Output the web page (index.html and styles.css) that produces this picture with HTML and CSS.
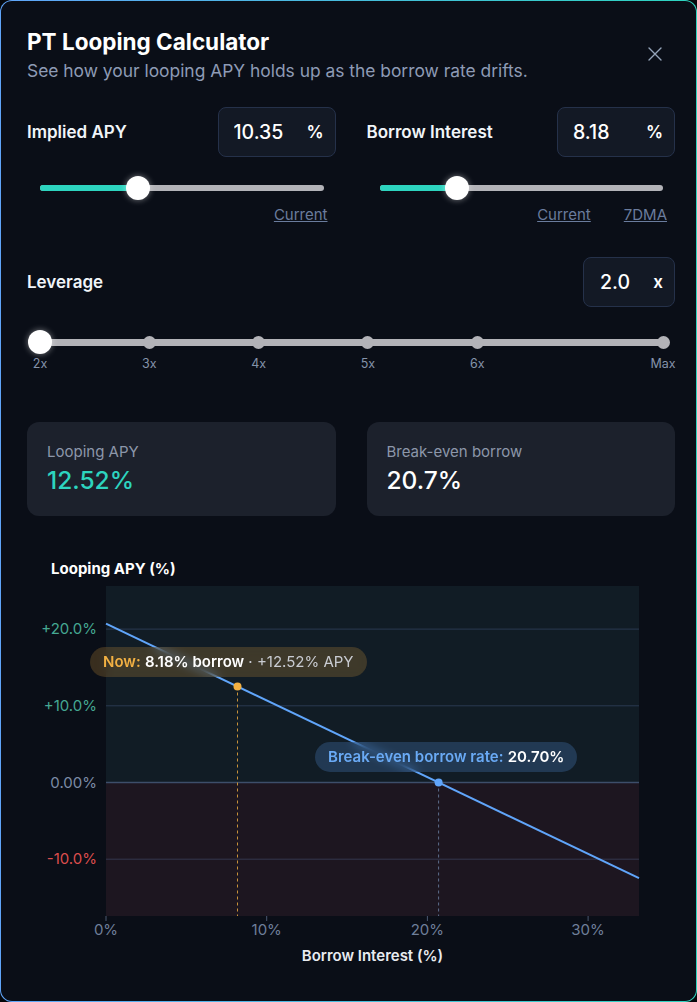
FILE: index.html
```html
<!doctype html>
<html>
<head>
<meta charset="utf-8">
<title>PT Looping Calculator</title>
<link rel="stylesheet" href="styles.css">
</head>
<body>
<div class="modal">
  <header class="modal-head">
    <div>
      <h1 class="title">PT Looping Calculator</h1>
      <p class="subtitle">See how your looping APY holds up as the borrow rate drifts.</p>
    </div>
    <button class="close" aria-label="Close">
      <svg width="14" height="14" viewBox="0 0 14 14"><path d="M1 1L13 13M13 1L1 13" stroke="#94a3b8" stroke-width="1.4" stroke-linecap="round"/></svg>
    </button>
  </header>

  <div class="rates">
    <div class="field">
      <div class="field-row">
        <label class="field-label">Implied APY</label>
        <div class="num-box"><input class="num-input" value="10.35"><span class="unit">%</span></div>
      </div>
      <div class="slider">
        <div class="track"><div class="fill" style="width:34.5%"></div></div>
        <div class="thumb" style="left:34.5%"></div>
      </div>
      <div class="presets"><a href="#">Current</a></div>
    </div>
    <div class="field">
      <div class="field-row">
        <label class="field-label">Borrow Interest</label>
        <div class="num-box"><input class="num-input" value="8.18"><span class="unit">%</span></div>
      </div>
      <div class="slider">
        <div class="track"><div class="fill" style="width:27.27%"></div></div>
        <div class="thumb" style="left:27.27%"></div>
      </div>
      <div class="presets"><a href="#">Current</a><a href="#">7DMA</a></div>
    </div>
  </div>

  <div class="leverage">
    <div class="field-row">
      <label class="field-label">Leverage</label>
      <div class="num-box num-box-sm"><input class="num-input" value="2.0"><span class="unit">x</span></div>
    </div>
    <div class="slider slider-lev">
      <div class="track track-lev"></div>
      <span class="dot" style="left:17.54%"></span>
      <span class="dot" style="left:35.09%"></span>
      <span class="dot" style="left:52.63%"></span>
      <span class="dot" style="left:70.18%"></span>
      <span class="dot" style="left:100%"></span>
      <div class="thumb" style="left:0%"></div>
    </div>
    <div class="ticks">
      <span style="left:0%">2x</span>
      <span style="left:17.54%">3x</span>
      <span style="left:35.09%">4x</span>
      <span style="left:52.63%">5x</span>
      <span style="left:70.18%">6x</span>
      <span style="left:100%">Max</span>
    </div>
  </div>

  <div class="stats">
    <div class="stat">
      <div class="stat-label">Looping APY</div>
      <div class="stat-value good">12.52%</div>
    </div>
    <div class="stat">
      <div class="stat-label">Break-even borrow</div>
      <div class="stat-value">20.7%</div>
    </div>
  </div>

  <div class="chart">
    <div class="chart-title">Looping APY (%)</div>
    <div class="plot">
      <svg class="plot-svg" width="648" height="390" viewBox="0 0 648 390">
        <!-- profit / loss zones -->
        <rect x="79" y="6" width="533" height="196.5" fill="#111c25"/>
        <rect x="79" y="202.5" width="533" height="133.5" fill="#1d1620"/>
        <!-- grid -->
        <line x1="79" x2="612" y1="49.1" y2="49.1" stroke="#2a3a51"/>
        <line x1="79" x2="612" y1="125.8" y2="125.8" stroke="#2a3a51"/>
        <line x1="79" x2="612" y1="279.2" y2="279.2" stroke="#34384e"/>
        <line x1="79" x2="612" y1="202.5" y2="202.5" stroke="#3d4e6a" stroke-width="1.5"/>
        <!-- y axis -->
        <text class="ytick pos" x="70" y="54">+20.0%</text>
        <text class="ytick pos" x="70" y="131">+10.0%</text>
        <text class="ytick zero" x="70" y="207.5">0.00%</text>
        <text class="ytick neg" x="70" y="284">-10.0%</text>
        <!-- x axis -->
        <g stroke="#4a5870">
          <line x1="79" x2="79" y1="336" y2="341"/>
          <line x1="239.7" x2="239.7" y1="336" y2="341"/>
          <line x1="400.4" x2="400.4" y1="336" y2="341"/>
          <line x1="561.1" x2="561.1" y1="336" y2="341"/>
        </g>
        <text class="xtick" x="79" y="355">0%</text>
        <text class="xtick" x="239.7" y="355">10%</text>
        <text class="xtick" x="400.4" y="355">20%</text>
        <text class="xtick" x="561.1" y="355">30%</text>
        <text class="axis-title" x="345.5" y="381">Borrow Interest (%)</text>
        <!-- markers -->
        <line x1="210.5" x2="210.5" y1="106.5" y2="336" stroke="#c8923a" stroke-dasharray="3 3"/>
        <line x1="411.6" x2="411.6" y1="202.5" y2="336" stroke="#5d6e8c" stroke-dasharray="3 3"/>
        <!-- apy = L*implied - (L-1)*borrow -->
        <line x1="79" y1="43.7" x2="612" y2="298.1" stroke="#60a5fa" stroke-width="2"/>
        <circle cx="210.5" cy="106.5" r="4" fill="#f2b043"/>
        <circle cx="411.6" cy="202.5" r="4" fill="#60a5fa"/>
      </svg>
      <div class="pill pill-now" style="left:63px;top:67px"><b class="now">Now:</b> <b>8.18% borrow</b> · +12.52% APY</div>
      <div class="pill pill-be" style="left:288px;top:162px"><b class="be">Break-even borrow rate:</b> <b>20.70%</b></div>
    </div>
  </div>
</div>
</body>
</html>
```

FILE: styles.css
```css
*{box-sizing:border-box}
body{margin:0;background:#05070b;font-family:Inter,"Noto Sans",sans-serif;color:#f1f5f9}

.modal{min-height:100vh;width:100%;padding:27px 21px 30px 26px;border:1px solid transparent;border-radius:12px;
  background:linear-gradient(#0a0e17,#0a0e17) padding-box,linear-gradient(90deg,#60a5fa,#2dd4bf) border-box}

.modal-head{display:flex;justify-content:space-between;align-items:flex-start}
.title{margin:0;font-size:22.5px;line-height:28px;font-weight:700;color:#fff}
.subtitle{margin:3px 0 0;font-size:17.4px;line-height:24px;color:#8e9bb5}
.close{width:28px;height:28px;margin:12px 6px 0 0;padding:0;border:0;background:none;display:flex;align-items:center;justify-content:center;cursor:pointer}

/* inputs + sliders */
.rates{display:grid;grid-template-columns:1fr 1fr;gap:31px;margin-top:24px}
.field-row{display:flex;justify-content:space-between;align-items:center;height:50px}
.field-label{font-size:17px;font-weight:600;color:#f1f5f9}
.num-box{display:flex;align-items:center;width:118px;height:50px;padding:0 11px 0 15px;background:#131925;border:1px solid #25314a;border-radius:8px}
.num-box-sm{width:92px;padding-left:16px}
.num-input{flex:1;min-width:0;border:0;background:none;outline:none;padding:0;font:500 19.5px Inter,sans-serif;color:#fff}
.unit{font-size:17px;font-weight:600;color:#fff}

.slider{position:relative;height:24px;margin:19px 12px 0 13px}
.track{position:relative;height:6px;top:9px;border-radius:3px;background:#b3b3b8;overflow:hidden}
.fill{height:100%;background:#2dd4bf}
.thumb{position:absolute;top:0;width:24px;height:24px;margin-left:-12px;border-radius:50%;background:#fff;box-shadow:0 0 6px rgba(255,255,255,.45)}

.presets{display:flex;justify-content:flex-end;gap:33px;margin-top:5px;padding-right:8px;line-height:20px}
.presets a{font-size:15px;color:#6a7c9d;text-decoration:underline}

.leverage{margin-top:32px}
.slider-lev{margin-top:23px}
.track-lev{height:7px;top:8.5px;border-radius:4px}
.dot{position:absolute;top:5.5px;width:13px;height:13px;margin-left:-6.5px;border-radius:50%;background:#b3b3b8}
.ticks{position:relative;height:16px;margin:2px 12px 0 13px}
.ticks span{position:absolute;top:0;transform:translateX(-50%);font-size:12.5px;line-height:16px;color:#8593aa}

/* summary cards */
.stats{display:grid;grid-template-columns:1fr 1fr;gap:31px;margin-top:50px}
.stat{height:94px;padding:20px;background:#1c212c;border-radius:12px}
.stat-label{font-size:15px;line-height:20px;color:#8c97aa}
.stat-value{margin-top:2px;font-size:24.5px;line-height:32px;font-weight:500;color:#fff}
.stat-value.good{color:#2dd4bf}

/* chart */
.chart{margin-top:43px}
.chart-title{padding-left:24px;font-size:15px;line-height:20px;font-weight:700;color:#fff}
.plot{position:relative;margin-top:1px;height:390px}
.plot-svg{display:block;font-family:Inter,sans-serif}
.ytick{font-size:15px;text-anchor:end}
.ytick.pos{fill:#45a892}
.ytick.zero{fill:#7c8ba5}
.ytick.neg{fill:#dc4d4d}
.xtick{font-size:15px;text-anchor:middle;fill:#6f7f9a}
.axis-title{font-size:15px;font-weight:600;text-anchor:middle;fill:#e8ebf0}

.pill{position:absolute;height:30px;padding:0 13px;border-radius:15px;white-space:nowrap;font-size:15px;line-height:30px;color:#c9ccd2;
  backdrop-filter:blur(5px)}
.pill b{font-weight:600;color:#fff}
.pill-now{background:rgba(245,176,66,.2)}
.pill-be{background:rgba(96,165,250,.22)}
.pill .now{color:#f2b043}
.pill .be{color:#6aaaf5}
```
